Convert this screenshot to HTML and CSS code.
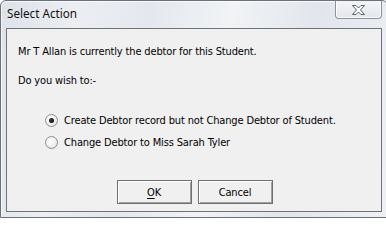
FILE: index.html
```html
<!DOCTYPE html>
<html>
<head>
<meta charset="utf-8">
<link rel="stylesheet" href="styles.css">
</head>
<body>
<div class="window">
  <div class="titlebar">
    <span class="title">Select Action</span>
    <span class="close">
      <svg width="15" height="12" viewBox="0 0 15 12"><path d="M1.5 1.5 L5 1.5 L7.5 4 L10 1.5 L13.5 1.5 L9.5 6 L13.5 10.5 L10 10.5 L7.5 8 L5 10.5 L1.5 10.5 L5.5 6 Z" fill="#fff" stroke="#5b6066" stroke-width="1" stroke-linejoin="round"/></svg>
    </span>
  </div>
  <div class="client">
    <p class="line first">Mr T Allan is currently the debtor for this Student.</p>
    <p class="line second">Do you wish to:-</p>
    <div class="options">
      <label class="option"><span class="radio checked"></span><span>Create Debtor record but not Change Debtor of Student.</span></label>
      <label class="option"><span class="radio"></span><span>Change Debtor to Miss Sarah Tyler</span></label>
    </div>
    <div class="buttons">
      <span class="btn default"><u>O</u>K</span>
      <span class="btn">Cancel</span>
    </div>
  </div>
</div>
</body>
</html>
```

FILE: styles.css
```css
html, body {
  margin: 0;
  padding: 0;
  background: #ffffff;
  overflow: hidden;
}
body {
  width: 386px;
  height: 218px;
}
.window {
  box-sizing: border-box;
  width: 388px;
  height: 218px;
  border: 1px solid #6b7079;
  border-radius: 6px 6px 0 0;
  padding: 0 5px 5px 5px;
  background: linear-gradient(100deg, #dde2e9 0%, #eceef2 18%, #e4e8ee 35%, #f1f3f5 55%, #e2e6ec 75%, #eef0f3 100%);
  box-shadow: inset 1px 1px 0 rgba(255,255,255,0.7);
}
.titlebar {
  height: 27px;
  display: flex;
  justify-content: space-between;
  align-items: flex-start;
}
.title {
  font-family: "Noto Sans", "Open Sans", sans-serif;
  font-size: 11.7px;
  line-height: 15px;
  margin-top: 5px;
  margin-left: 1px;
  color: #111;
}
.close {
  box-sizing: border-box;
  width: 47px;
  height: 18px;
  border: 1px solid #8b929b;
  border-top: none;
  border-radius: 0 0 4px 4px;
  background: linear-gradient(#f4f5f7, #e3e6ea);
  box-shadow: inset 0 -1px 0 rgba(255,255,255,0.8), inset 1px 0 0 rgba(255,255,255,0.8), inset -1px 0 0 rgba(255,255,255,0.8);
  display: flex;
  justify-content: center;
  align-items: center;
  padding-top: 1px;
}
.close svg { display: block; }
.client {
  box-sizing: border-box;
  height: 184px;
  border: 1px solid #6f7379;
  background: #f0f0f0;
  padding: 16px 10px 7px 11px;
  display: flex;
  flex-direction: column;
  font-family: "DejaVu Sans Condensed", "DejaVu Sans", sans-serif;
  font-size: 11px;
  line-height: 13px;
  letter-spacing: -0.15px;
  color: #000;
}
.line { margin: 0; }
.second { margin-top: 16px; }
.options {
  margin-top: 27px;
  margin-left: 27px;
  display: flex;
  flex-direction: column;
  gap: 9px;
}
.option {
  display: flex;
  align-items: center;
  gap: 6px;
  height: 13px;
}
.radio {
  box-sizing: border-box;
  width: 13px;
  height: 13px;
  border-radius: 50%;
  border: 1px solid #8e8f8f;
  background: radial-gradient(circle at 40% 40%, #ffffff 0%, #f2f2f2 45%, #d8d8d8 100%);
  display: flex;
  justify-content: center;
  align-items: center;
  flex: none;
}
.radio.checked::after {
  content: "";
  width: 5px;
  height: 5px;
  border-radius: 50%;
  background: radial-gradient(circle at 40% 40%, #3a3a3a, #000000);
}
.buttons {
  margin-top: auto;
  display: flex;
  justify-content: center;
  gap: 6px;
}
.btn {
  box-sizing: border-box;
  width: 75px;
  height: 24px;
  border: 1px solid #707070;
  background: #f0f0f0;
  box-shadow: inset 1px 1px 0 #ffffff, inset -1px -1px 0 #a0a0a0;
  display: flex;
  justify-content: center;
  align-items: center;
}
.btn u { text-decoration-thickness: 1px; text-underline-offset: 2px; }
```
